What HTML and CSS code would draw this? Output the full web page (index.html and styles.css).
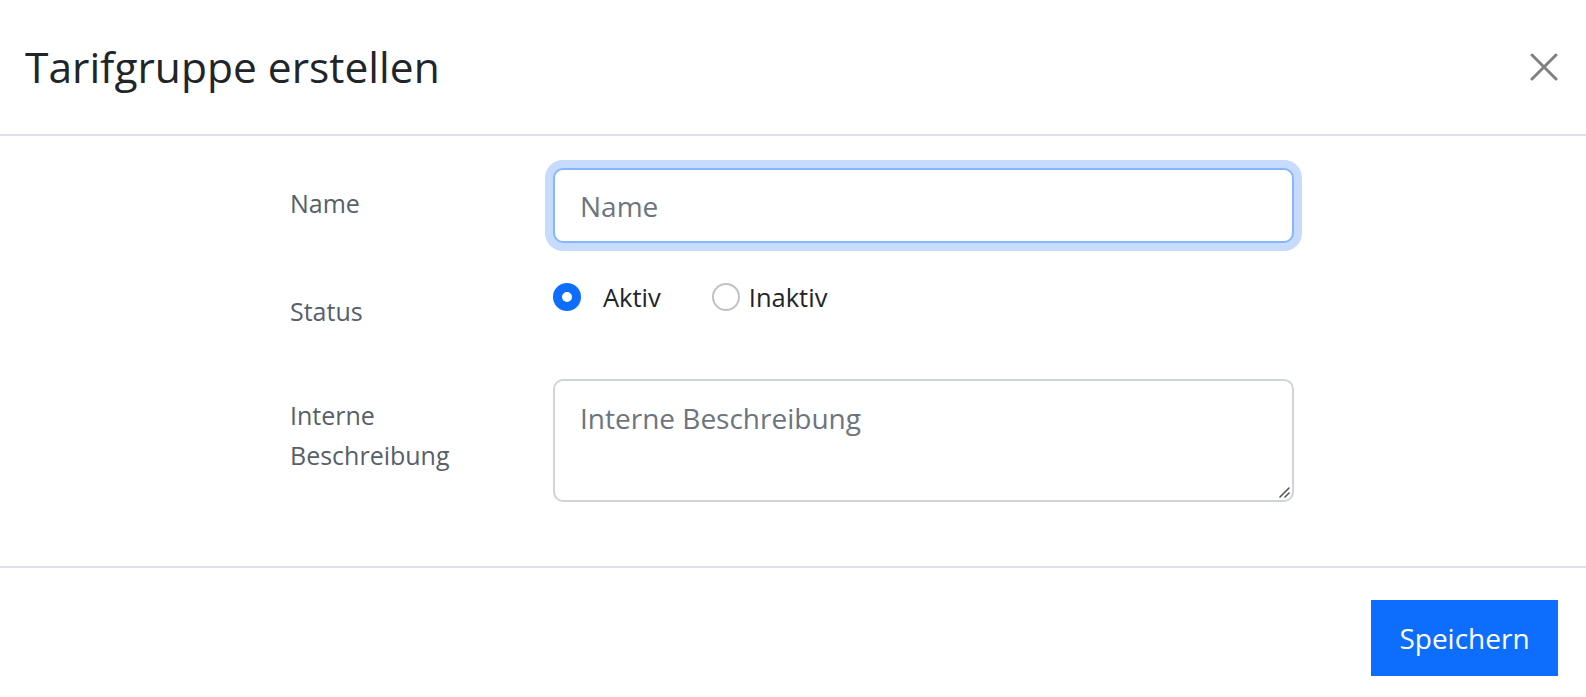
FILE: index.html
```html
<!DOCTYPE html>
<html lang="de">
<head>
<meta charset="utf-8">
<title>Tarifgruppe erstellen</title>
<link rel="stylesheet" href="styles.css">
</head>
<body>
<div class="modal">
  <header class="modal-header">
    <h1 class="modal-title">Tarifgruppe erstellen</h1>
    <button class="close" type="button" aria-label="Schließen">
      <svg viewBox="0 0 28 28" width="28" height="28" aria-hidden="true">
        <path d="M2 2 L26 26 M26 2 L2 26" stroke="#808080" stroke-width="3" stroke-linecap="round" fill="none"/>
      </svg>
    </button>
  </header>
  <main class="modal-body">
    <form class="form">
      <div class="row row-name">
        <label class="label" for="name">Name</label>
        <input class="input focused" id="name" type="text" placeholder="Name">
      </div>
      <div class="row row-status">
        <span class="label">Status</span>
        <div class="radios">
          <label class="radio radio-active"><input type="radio" name="status" checked><span>Aktiv</span></label>
          <label class="radio radio-inactive"><input type="radio" name="status"><span>Inaktiv</span></label>
        </div>
      </div>
      <div class="row row-desc">
        <label class="label" for="desc">Interne Beschreibung</label>
        <div class="textarea-wrap">
          <textarea class="textarea" id="desc" placeholder="Interne Beschreibung"></textarea>
          <svg class="grip" viewBox="0 0 12 12" width="12" height="12" aria-hidden="true">
            <path d="M2 11 L11 2 M7 11 L11 7" stroke="#555" stroke-width="1.6" stroke-linecap="round" fill="none"/>
          </svg>
        </div>
      </div>
    </form>
  </main>
  <footer class="modal-footer">
    <button class="btn-primary" type="button">Speichern</button>
  </footer>
</div>
</body>
</html>
```
FILE: styles.css
```css
* { box-sizing: border-box; }
html, body { margin: 0; padding: 0; background: #fff; }
body {
  font-family: "Open Sans", "Noto Sans", sans-serif;
  color: #212529;
}
.modal { width: 1586px; }
.modal-header {
  height: 136px;
  border-bottom: 2px solid #dee2e6;
  display: flex;
  align-items: center;
  justify-content: space-between;
  padding: 0 28px 0 25px;
}
.modal-title {
  margin: 0;
  font-size: 42.5px;
  font-weight: 400;
  line-height: 50px;
  color: #212529;
}
.close {
  border: 0;
  background: transparent;
  padding: 0;
  width: 28px;
  height: 28px;
  display: block;
  cursor: pointer;
}
.close svg { display: block; }

.modal-body {
  padding: 32px 0 64px 290px;
}
.form { display: flex; flex-direction: column; }
.row {
  display: grid;
  grid-template-columns: 200px 741px;
  column-gap: 63px;
  align-items: start;
}
.label {
  font-size: 25px;
  line-height: 40px;
  color: #575f69;
}
.row-name .label { padding-top: 15px; }
.input {
  height: 75px;
  border: 2px solid #ced4da;
  border-radius: 10px;
  padding: 0 25px;
  font-family: inherit;
  font-size: 28px;
  color: #212529;
  outline: none;
}
.input.focused {
  border-color: #86b7fe;
  box-shadow: 0 0 0 8px #c6dbfd;
}
.input::placeholder, .textarea::placeholder { color: #6c757d; opacity: 1; }

.row-status { margin-top: 34px; }
.row-status .label { padding-top: 14px; }
.radios { display: flex; align-items: center; height: 40px; }
.radio { display: flex; align-items: center; font-size: 25.5px; line-height: 40px; color: #212529; }
.radio input {
  appearance: none;
  -webkit-appearance: none;
  margin: 0;
  width: 28px;
  height: 28px;
  border-radius: 50%;
  border: 2px solid #c2c2c2;
  background: #fff;
}
.radio input:checked {
  border: 9px solid #0d6efd;
}
.radio-active span { margin-left: 22px; }
.radio-inactive { margin-left: 51px; }
.radio-inactive span { margin-left: 9px; }

.row-desc { margin-top: 48px; }
.row-desc .label { padding-top: 16px; }
.textarea-wrap { position: relative; }
.textarea {
  width: 100%;
  height: 123px;
  border: 2px solid #ced4da;
  border-radius: 10px;
  padding: 17px 25px;
  font-family: inherit;
  font-size: 28px;
  line-height: 40px;
  color: #212529;
  resize: none;
  outline: none;
  display: block;
}
.grip {
  position: absolute;
  right: 4px;
  bottom: 4px;
  display: block;
}

.modal-footer {
  border-top: 2px solid #dee2e6;
  display: flex;
  justify-content: flex-end;
  padding: 32px 28px 21px 0;
}
.btn-primary {
  width: 187px;
  height: 76px;
  border: 0;
  border-radius: 0;
  background: #0d6efd;
  color: #fff;
  font-family: inherit;
  font-size: 28px;
  padding: 0;
  cursor: pointer;
}
```
